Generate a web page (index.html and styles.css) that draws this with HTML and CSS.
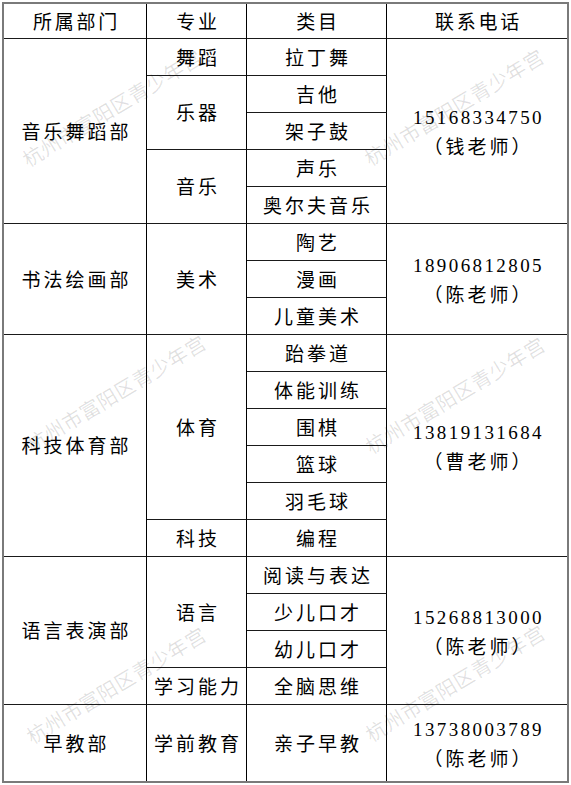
FILE: index.html
```html
<!DOCTYPE html>
<html lang="zh-CN">
<head>
<meta charset="utf-8">
<title>杭州市富阳区青少年宫</title>
<link rel="stylesheet" href="styles.css">
</head>
<body>
<div class="sheet">
  <div class="grid">
    <div class="c h">所属部门</div>
    <div class="c h">专业</div>
    <div class="c h">类目</div>
    <div class="c h e">联系电话</div>

    <div class="c s5">音乐舞蹈部</div>
    <div class="c">舞蹈</div>
    <div class="c">拉丁舞</div>
    <div class="c e s5 ph"><span class="num">15168334750</span><span>（钱老师）</span></div>
    <div class="c s2">乐器</div>
    <div class="c">吉他</div>
    <div class="c">架子鼓</div>
    <div class="c s2">音乐</div>
    <div class="c">声乐</div>
    <div class="c">奥尔夫音乐</div>

    <div class="c s3">书法绘画部</div>
    <div class="c s3">美术</div>
    <div class="c">陶艺</div>
    <div class="c e s3 ph"><span class="num">18906812805</span><span>（陈老师）</span></div>
    <div class="c">漫画</div>
    <div class="c">儿童美术</div>

    <div class="c s6">科技体育部</div>
    <div class="c s5">体育</div>
    <div class="c">跆拳道</div>
    <div class="c e s6 ph"><span class="num">13819131684</span><span>（曹老师）</span></div>
    <div class="c">体能训练</div>
    <div class="c">围棋</div>
    <div class="c">篮球</div>
    <div class="c">羽毛球</div>
    <div class="c">科技</div>
    <div class="c">编程</div>

    <div class="c s4">语言表演部</div>
    <div class="c s3">语言</div>
    <div class="c">阅读与表达</div>
    <div class="c e s4 ph"><span class="num">15268813000</span><span>（陈老师）</span></div>
    <div class="c">少儿口才</div>
    <div class="c">幼儿口才</div>
    <div class="c">学习能力</div>
    <div class="c">全脑思维</div>

    <div class="c b">早教部</div>
    <div class="c b">学前教育</div>
    <div class="c b">亲子早教</div>
    <div class="c b e ph"><span class="num">13738003789</span><span>（陈老师）</span></div>
  </div>
  <div class="wm wm1">杭州市富阳区青少年宫</div>
  <div class="wm wm2">杭州市富阳区青少年宫</div>
  <div class="wm wm3">杭州市富阳区青少年宫</div>
  <div class="wm wm4">杭州市富阳区青少年宫</div>
  <div class="wm wm5">杭州市富阳区青少年宫</div>
  <div class="wm wm6">杭州市富阳区青少年宫</div>
</div>
</body>
</html>
```

FILE: styles.css
```css
html, body {
  margin: 0;
  padding: 0;
  background: #fff;
}

.sheet {
  position: relative;
  margin: 2px 0 0 2px;
  width: 567px;
}

.grid {
  display: grid;
  grid-template-columns: 143px 100px 140px 180px;
  grid-template-rows: 35px repeat(18, 37px) 76px;
  border: 2px solid #7a7a7a;
  width: 563px;
  font-family: "Liberation Serif", "Noto Sans CJK SC", serif;
  font-size: 19px;
  color: #000;
}

.c {
  box-sizing: border-box;
  border-right: 1px solid #000;
  border-bottom: 1px solid #1a1a1a;
  display: flex;
  align-items: center;
  justify-content: center;
  letter-spacing: 3px;
  padding-left: 3px;
  line-height: 1.2;
  white-space: nowrap;
  font-family: "Noto Sans CJK SC", serif;
  font-weight: 400;
}

.h {
  letter-spacing: 2.8px;
}

.e { border-right: none; }
.b { border-bottom: none; }

.s2 { grid-row: span 2; }
.s3 { grid-row: span 3; }
.s4 { grid-row: span 4; }
.s5 { grid-row: span 5; }
.s6 { grid-row: span 6; }

.ph {
  flex-direction: column;
  line-height: 28px;
  padding-top: 2px;
}

.num {
  font-family: "Liberation Serif", serif;
  font-size: 19px;
  letter-spacing: 2.4px;
}

.wm {
  position: absolute;
  width: 220px;
  text-align: center;
  font-family: "Noto Sans CJK SC", sans-serif;
  font-size: 20px;
  letter-spacing: 0.5px;
  color: rgba(0, 0, 0, 0.12);
  transform: translate(-50%, -50%) rotate(-31deg);
  pointer-events: none;
  white-space: nowrap;
  line-height: 1;
}

.wm1 { left: 110px; top: 106px; }
.wm2 { left: 452px; top: 105px; }
.wm3 { left: 114px; top: 391px; }
.wm4 { left: 453px; top: 393px; }
.wm5 { left: 114px; top: 683px; }
.wm6 { left: 453px; top: 681px; }
```
